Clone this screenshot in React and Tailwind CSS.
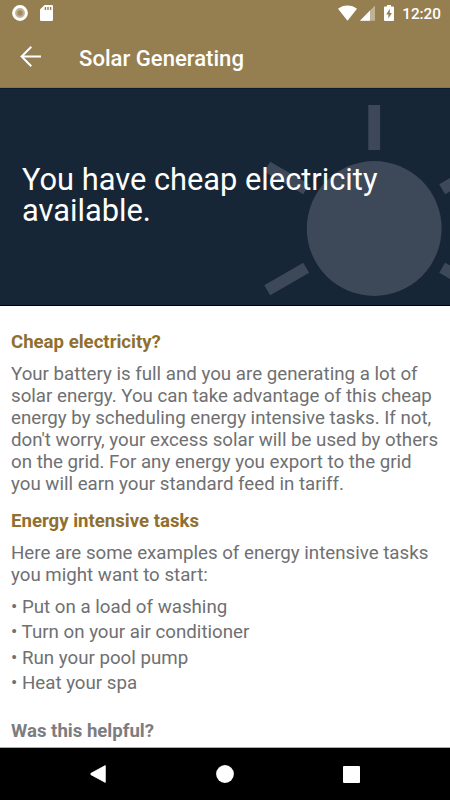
import React from "react";

const paragraph = [
    'Your battery is full and you are generating a lot of',
    'solar energy. You can take advantage of this cheap',
    'energy by scheduling energy intensive tasks. If not,',
    "don't worry, your excess solar will be used by others",
    'on the grid. For any energy you export to the grid',
    'you will earn your standard feed in tariff.',
];

const tasks = [
    { id: 1, text: 'Put on a load of washing' },
    { id: 2, text: 'Turn on your air conditioner' },
    { id: 3, text: 'Run your pool pump' },
    { id: 4, text: 'Heat your spa' },
];

const rays = [0, 60, 120, 180, 240, 300];

function StatusBar() {
    return (
        <div className="flex h-[26px] items-center justify-between pl-3 pr-[9px] text-white">
            <div className="flex items-center gap-3">
                <svg width="16" height="16" viewBox="0 0 16 16">
                    <circle cx="8" cy="8" r="6.4" fill="#c0b292" stroke="#fff" strokeWidth="3" />
                    <circle cx="8" cy="8" r="2.7" fill="#a18c62" />
                </svg>
                <svg width="13" height="16" viewBox="0 0 13 16">
                    <path d="M4.6 0H11.8Q13 0 13 1.2V14.8Q13 16 11.8 16H1.2Q0 16 0 14.8V4.6Z" fill="#fff" />
                    <path d="M5.4 2v3M8 2v3M10.6 2v3" stroke="#957e4f" strokeWidth="1.4" />
                </svg>
            </div>
            <div className="flex items-center">
                <svg width="19" height="16" viewBox="0 0 19 16">
                    <path d="M9.5 15.7L0 3.8Q4 .4 9.5 .4T19 3.8Z" fill="#fff" />
                </svg>
                <svg className="ml-[3px]" width="15" height="16" viewBox="0 0 15 16">
                    <path d="M15 .6V15.7H0Z" fill="#bfb295" />
                    <path d="M10 5.6V15.7H0Z" fill="#fff" />
                </svg>
                <svg className="ml-[9px]" width="10" height="16" viewBox="0 0 10 16">
                    <path d="M3 0H7V1.6H9Q10 1.6 10 2.6V15Q10 16 9 16H1Q0 16 0 15V2.6Q0 1.6 1 1.6H3Z" fill="#fff" />
                    <path d="M5.8 3.7L2.2 9.5H4.4V13.6L7.9 7.9H5.8Z" fill="#957e4f" />
                </svg>
                <span className="ml-[8px] pt-[2px] text-[15.3px] leading-[18px] font-medium">12:20</span>
            </div>
        </div>
    );
}

function Sun() {
    return (
        <svg className="absolute inset-0" width="450" height="216" viewBox="0 0 450 216" fill="#3d4958">
            <circle cx="374.2" cy="139.5" r="67.4" />
            {rays.map((angle) => (
                <rect
                    key={angle}
                    x="368.3"
                    y="16"
                    width="11.8"
                    height="45"
                    transform={`rotate(${angle} 374.2 139.5)`}
                />
            ))}
        </svg>
    );
}

function NavigationBar() {
    return (
        <nav className="flex h-[53px] shrink-0 items-center justify-between border-t border-[#a6aca7] bg-black pl-[90px] pr-[90px]">
            <svg width="17" height="18" viewBox="0 0 17 18">
                <path d="M15.3 .6V17.4L1 9.7Q.2 9 1 8.3Z" fill="#fff" stroke="#fff" strokeWidth=".8" strokeLinejoin="round" />
            </svg>
            <svg width="18" height="18" viewBox="0 0 18 18">
                <circle cx="9" cy="9" r="8.9" fill="#fff" />
            </svg>
            <div className="h-[17px] w-[17px] rounded-[1px] bg-white" />
        </nav>
    );
}

export default function App() {
    return (
        <div className="flex h-[800px] w-[450px] flex-col overflow-hidden bg-white font-['Roboto',sans-serif]">
            <header className="h-[88px] shrink-0 border-b border-[#87744c] bg-[#957e4f]">
                <StatusBar />
                <div className="flex h-[61px] items-center pl-5 text-white">
                    <svg width="22" height="22" viewBox="0 0 22 22" fill="none" stroke="#fff" strokeWidth="2">
                        <path d="M21 10.5H1.8M11.3 .8L1.6 10.5L11.3 20.2" />
                    </svg>
                    <h1 className="ml-[37px] pt-[2px] text-[22.1px] leading-[26px] font-medium">Solar Generating</h1>
                </div>
            </header>

            <section className="relative h-[218px] shrink-0 overflow-hidden border-t border-b border-t-[#0c1b30] border-b-black bg-[#162637]">
                <Sun />
                <h2 className="relative pl-[22px] pt-[75px] text-[30.8px] leading-[31px] text-white">
                    You have cheap electricity<br />available.
                </h2>
            </section>

            <main className="min-h-0 flex-1 overflow-hidden px-[11px] pt-[25px] text-[18.72px] leading-[22px] text-[#6f7072]">
                <h3 className="text-[18.6px] font-bold text-[#8f7030]">Cheap electricity?</h3>
                <p className="mt-[10px] whitespace-nowrap">
                    {paragraph.map((line) => (
                        <span className="block" key={line}>{line}</span>
                    ))}
                </p>
                <h3 className="mt-[15px] text-[18.6px] font-bold text-[#8f7030]">Energy intensive tasks</h3>
                <p className="mt-[10px] whitespace-nowrap">
                    Here are some examples of energy intensive tasks<br />you might want to start:
                </p>
                <ul className="mt-[9px] leading-[25.4px]">
                    {tasks.map((task) => (
                        <li key={task.id}>• {task.text}</li>
                    ))}
                </ul>
                <h3 className="mt-[23px] text-[18.6px] font-bold text-[#7c7d7e]">Was this helpful?</h3>
            </main>

            <NavigationBar />
        </div>
    );
}
